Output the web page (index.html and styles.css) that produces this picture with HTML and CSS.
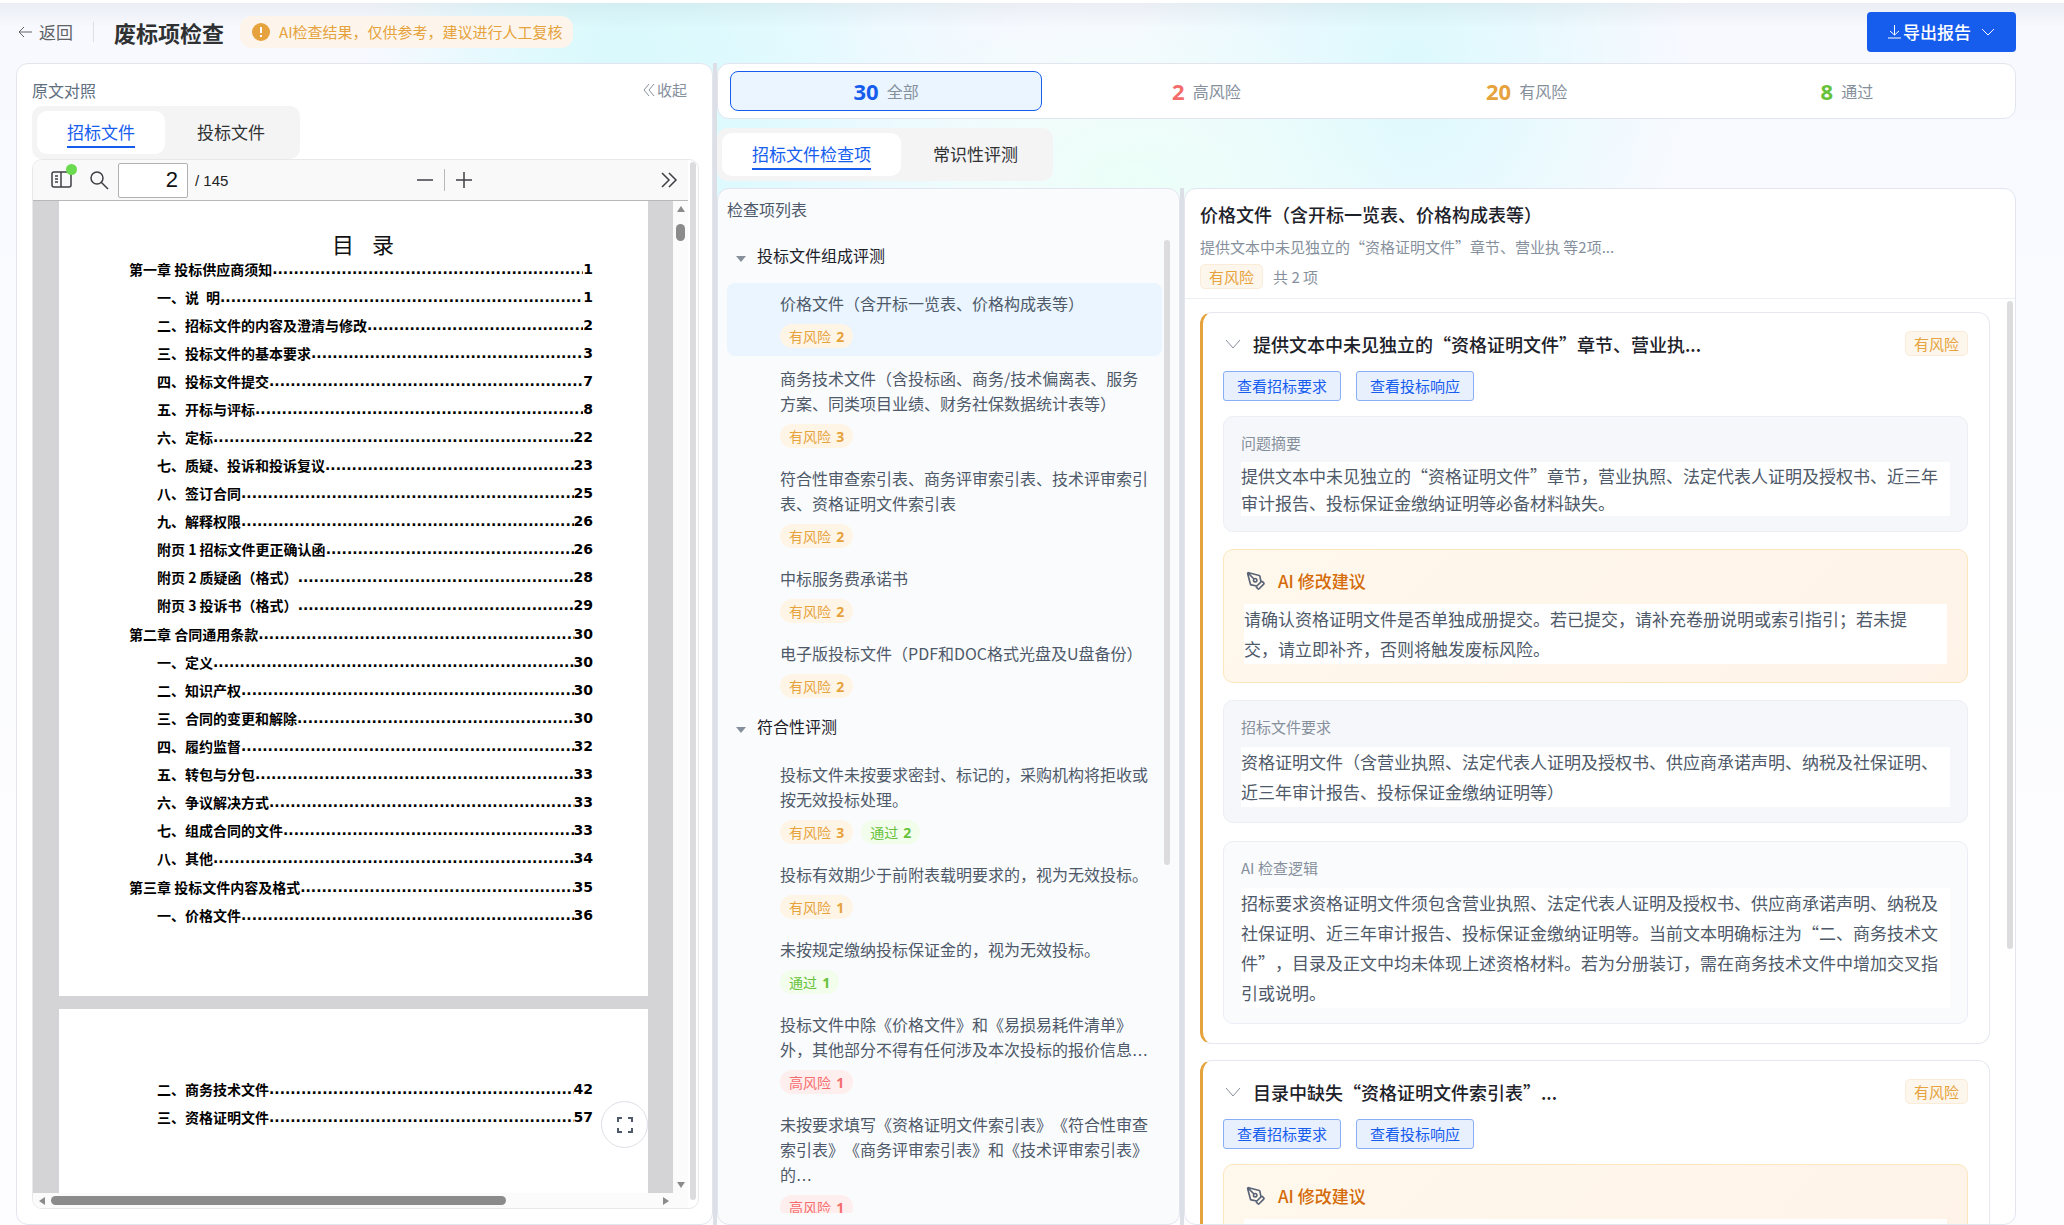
FILE: index.html
```html
<!DOCTYPE html>
<html lang="zh-CN">
<head>
<meta charset="utf-8">
<title>废标项检查</title>
<link rel="stylesheet" href="styles.css">
</head>
<body>
<header class="topbar">
  <a class="back" href="#"><svg width="16" height="16" viewBox="0 0 16 16"><path d="M15 8H2M7 3 2 8l5 5"/></svg>返回</a>
  <span class="topbar-line"></span>
  <h1>废标项检查</h1>
  <p class="notice"><svg width="18" height="18" viewBox="0 0 18 18"><circle cx="9" cy="9" r="9"/><path d="M9 4v6M9 12v2"/></svg>AI检查结果，仅供参考，建议进行人工复核</p>
  <button class="export"><svg width="13" height="16" viewBox="0 0 13 16"><path d="M6.500 1v10M2 7l4.500 4L11 7M0 14h13"/></svg>导出报告<svg class="export-caret" width="14" height="14" viewBox="0 0 14 14"><path d="m1 4 6 6 6-6"/></svg></button>
</header>
<main class="workspace">
  <section class="panel source">
    <div class="source-head"><h2>原文对照</h2><button class="collapse"><svg width="12" height="14" viewBox="0 0 12 14"><path d="M6 1 1 7l5 6M11 1 6 7l5 6"/></svg>收起</button></div>
    <nav class="tabs"><button class="tab on"><span>招标文件</span></button><button class="tab"><span>投标文件</span></button></nav>
    <div class="viewer">
      <div class="viewer-main">
        <div class="toolbar">
          <button class="tool side" aria-label="侧边栏"><svg width="22" height="18" viewBox="0 0 22 18"><rect x="1" y="1" width="19" height="15" rx="2"/><path d="M10 1v15M4 5h3M4 8h3M4 11h3"/></svg><i class="dot"></i></button>
          <button class="tool find" aria-label="查找"><svg width="20" height="20" viewBox="0 0 20 20"><circle cx="8" cy="8" r="6"/><path d="m12 12 7 7"/></svg></button>
          <input class="page-input" aria-label="页码" value="2"><span class="page-total">/ 145</span>
          <span class="zooms"><button class="tool" aria-label="缩小"><svg width="18" height="18" viewBox="0 0 18 18"><path d="M1 9h16"/></svg></button><i class="zoom-line"></i><button class="tool" aria-label="放大"><svg width="18" height="18" viewBox="0 0 18 18"><path d="M1 9h16M9 1v16"/></svg></button></span>
          <button class="tool more" aria-label="更多"><svg width="18" height="18" viewBox="0 0 18 18"><path d="m2 2 7 7-7 7M9 2l7 7-7 7"/></svg></button>
        </div>
        <div class="pdf">
          <div class="pages">
            <article class="page first">
              <h3>目<span class="title-gap"></span>录</h3>
              <ol class="toc">
                <li class="chapter"><span>第一章 投标供应商须知</span><i></i><b>1</b></li>
                <li><span>一、说&ensp;明</span><i></i><b>1</b></li>
                <li><span>二、招标文件的内容及澄清与修改</span><i></i><b>2</b></li>
                <li><span>三、投标文件的基本要求</span><i></i><b>3</b></li>
                <li><span>四、投标文件提交</span><i></i><b>7</b></li>
                <li><span>五、开标与评标</span><i></i><b>8</b></li>
                <li><span>六、定标</span><i></i><b>22</b></li>
                <li><span>七、质疑、投诉和投诉复议</span><i></i><b>23</b></li>
                <li><span>八、签订合同</span><i></i><b>25</b></li>
                <li><span>九、解释权限</span><i></i><b>26</b></li>
                <li><span>附页 1 招标文件更正确认函</span><i></i><b>26</b></li>
                <li><span>附页 2 质疑函（格式）</span><i></i><b>28</b></li>
                <li><span>附页 3 投诉书（格式）</span><i></i><b>29</b></li>
                <li class="chapter"><span>第二章 合同通用条款</span><i></i><b>30</b></li>
                <li><span>一、定义</span><i></i><b>30</b></li>
                <li><span>二、知识产权</span><i></i><b>30</b></li>
                <li><span>三、合同的变更和解除</span><i></i><b>30</b></li>
                <li><span>四、履约监督</span><i></i><b>32</b></li>
                <li><span>五、转包与分包</span><i></i><b>33</b></li>
                <li><span>六、争议解决方式</span><i></i><b>33</b></li>
                <li><span>七、组成合同的文件</span><i></i><b>33</b></li>
                <li><span>八、其他</span><i></i><b>34</b></li>
                <li class="chapter"><span>第三章 投标文件内容及格式</span><i></i><b>35</b></li>
                <li><span>一、价格文件</span><i></i><b>36</b></li>
              </ol>
            </article>
            <article class="page second">
              <ol class="toc">
                <li><span>二、商务技术文件</span><i></i><b>42</b></li>
                <li><span>三、资格证明文件</span><i></i><b>57</b></li>
              </ol>
              <button class="fullscreen" aria-label="全屏"><svg width="18" height="18" viewBox="0 0 18 18"><path d="M2 6V2h4M12 2h4v4M16 12v4h-4M6 16H2v-4"/></svg></button>
            </article>
          </div>
          <div class="vbar"><i class="arrow up"></i><i class="vthumb"></i><i class="arrow down"></i></div>
        </div>
        <div class="hbar"><i class="arrow left"></i><span class="htrack"><i class="hthumb"></i></span><i class="arrow right"></i></div>
      </div>
      <i class="viewer-thumb"></i>
    </div>
  </section>
  <i class="splitter"></i>
  <section class="results">
    <div class="panel stats">
      <button class="stat on blue"><b>30</b>全部</button>
      <button class="stat red"><b>2</b>高风险</button>
      <button class="stat orange"><b>20</b>有风险</button>
      <button class="stat green"><b>8</b>通过</button>
    </div>
    <nav class="tabs"><button class="tab on"><span>招标文件检查项</span></button><button class="tab"><span>常识性评测</span></button></nav>
    <div class="columns">
      <section class="panel list">
        <h2>检查项列表</h2>
        <div class="list-body">
          <div class="groups">
            <h3 class="group"><i></i>投标文件组成评测</h3>
            <ul class="items">
              <li class="item on"><p>价格文件（含开标一览表、价格构成表等）</p><div class="badges"><span class="badge warn">有风险 <b>2</b></span></div></li>
              <li class="item"><p>商务技术文件（含投标函、商务/技术偏离表、服务方案、同类项目业绩、财务社保数据统计表等）</p><div class="badges"><span class="badge warn">有风险 <b>3</b></span></div></li>
              <li class="item"><p>符合性审查索引表、商务评审索引表、技术评审索引表、资格证明文件索引表</p><div class="badges"><span class="badge warn">有风险 <b>2</b></span></div></li>
              <li class="item"><p>中标服务费承诺书</p><div class="badges"><span class="badge warn">有风险 <b>2</b></span></div></li>
              <li class="item"><p>电子版投标文件（PDF和DOC格式光盘及U盘备份）</p><div class="badges"><span class="badge warn">有风险 <b>2</b></span></div></li>
            </ul>
            <h3 class="group"><i></i>符合性评测</h3>
            <ul class="items">
              <li class="item"><p>投标文件未按要求密封、标记的，采购机构将拒收或按无效投标处理。</p><div class="badges"><span class="badge warn">有风险 <b>3</b></span><span class="badge pass">通过 <b>2</b></span></div></li>
              <li class="item"><p>投标有效期少于前附表载明要求的，视为无效投标。</p><div class="badges"><span class="badge warn">有风险 <b>1</b></span></div></li>
              <li class="item"><p>未按规定缴纳投标保证金的，视为无效投标。</p><div class="badges"><span class="badge pass">通过 <b>1</b></span></div></li>
              <li class="item"><p>投标文件中除《价格文件》和《易损易耗件清单》外，其他部分不得有任何涉及本次投标的报价信息<span class="dots">…</span></p><div class="badges"><span class="badge high">高风险 <b>1</b></span></div></li>
              <li class="item"><p>未按要求填写《资格证明文件索引表》《符合性审查索引表》《商务评审索引表》和《技术评审索引表》的<span class="dots">…</span></p><div class="badges"><span class="badge high">高风险 <b>1</b></span></div></li>
            </ul>
          </div>
          <i class="list-thumb"></i>
        </div>
      </section>
      <i class="splitter"></i>
      <section class="panel detail">
        <div class="detail-head">
          <h2>价格文件（含开标一览表、价格构成表等）</h2>
          <p>提供文本中未见独立的“资格证明文件”章节、营业执 等2项...</p>
          <div class="detail-meta"><span class="tag">有风险</span><span>共 2 项</span></div>
        </div>
        <div class="detail-body">
          <div class="cards">
            <article class="card">
              <div class="card-head"><svg width="16" height="16" viewBox="0 0 16 16"><path d="m1 4 7 8 7-8"/></svg><h3>提供文本中未见独立的“资格证明文件”章节、营业执...</h3><span class="tag">有风险</span></div>
              <div class="actions"><button>查看招标要求</button><button>查看投标响应</button></div>
              <div class="block"><h4>问题摘要</h4><p class="tight">提供文本中未见独立的“资格证明文件”章节，营业执照、法定代表人证明及授权书、近三年审计报告、投标保证金缴纳证明等必备材料缺失。</p></div>
              <div class="block advice"><h4><svg width="20" height="20" viewBox="0 0 24 24"><path d="M15.707 21.293a1 1 0 0 1-1.414 0l-1.586-1.586a1 1 0 0 1 0-1.414l5.586-5.586a1 1 0 0 1 1.414 0l1.586 1.586a1 1 0 0 1 0 1.414zM18 13l-1.375-6.874a1 1 0 0 0-.746-.776L3.235 2.028a1 1 0 0 0-1.207 1.207L5.350 15.879a1 1 0 0 0 .776.746L13 18M2.300 2.300l7.286 7.286"/><circle cx="11" cy="11" r="2"/></svg>AI 修改建议</h4><p>请确认资格证明文件是否单独成册提交。若已提交，请补充卷册说明或索引指引；若未提交，请立即补齐，否则将触发废标风险。</p></div>
              <div class="block"><h4>招标文件要求</h4><p>资格证明文件（含营业执照、法定代表人证明及授权书、供应商承诺声明、纳税及社保证明、近三年审计报告、投标保证金缴纳证明等）</p></div>
              <div class="block pale"><h4>AI 检查逻辑</h4><p>招标要求资格证明文件须包含营业执照、法定代表人证明及授权书、供应商承诺声明、纳税及社保证明、近三年审计报告、投标保证金缴纳证明等。当前文本明确标注为“二、商务技术文件”，目录及正文中均未体现上述资格材料。若为分册装订，需在商务技术文件中增加交叉指引或说明。</p></div>
            </article>
            <article class="card">
              <div class="card-head"><svg width="16" height="16" viewBox="0 0 16 16"><path d="m1 4 7 8 7-8"/></svg><h3>目录中缺失“资格证明文件索引表”...</h3><span class="tag">有风险</span></div>
              <div class="actions"><button>查看招标要求</button><button>查看投标响应</button></div>
              <div class="block advice"><h4><svg width="20" height="20" viewBox="0 0 24 24"><path d="M15.707 21.293a1 1 0 0 1-1.414 0l-1.586-1.586a1 1 0 0 1 0-1.414l5.586-5.586a1 1 0 0 1 1.414 0l1.586 1.586a1 1 0 0 1 0 1.414zM18 13l-1.375-6.874a1 1 0 0 0-.746-.776L3.235 2.028a1 1 0 0 0-1.207 1.207L5.350 15.879a1 1 0 0 0 .776.746L13 18M2.300 2.300l7.286 7.286"/><circle cx="11" cy="11" r="2"/></svg>AI 修改建议</h4><p>&nbsp;</p></div>
            </article>
          </div>
          <i class="detail-thumb"></i>
        </div>
      </section>
    </div>
  </section>
</main>
</body>
</html>
```
FILE: styles.css
```css
* { box-sizing: border-box; }
body, h1, h2, h3, h4, p, ol, ul { margin: 0; padding: 0; }
h1, h2, h3, h4 { font-weight: 400; }
ul, ol { list-style: none; }
i { font-style: normal; display: block; flex: none; }
body {
  height: 100vh;
  overflow: hidden;
  display: flex;
  flex-direction: column;
  border-top: 3px solid #fff;
  font-family: "Noto Sans CJK SC", sans-serif;
  font-size: 16px;
  line-height: 24px;
  color: #4e5969;
  text-spacing-trim: space-all;
  background:
    linear-gradient(rgba(90, 110, 120, .09), rgba(90, 110, 120, 0) 28px),
    radial-gradient(ellipse 260px 200px at 620px 50px, #d9f9fc, rgba(217, 249, 252, 0)),
    radial-gradient(ellipse 280px 180px at 1130px 180px, #ebfff8, rgba(235, 255, 248, 0)),
    radial-gradient(ellipse 280px 340px at 1410px 70px, #dcf9fd, rgba(220, 249, 253, 0)),
    radial-gradient(ellipse 330px 400px at 720px 170px, #defaff, rgba(222, 250, 255, 0)),
    linear-gradient(#f7f9ff, #fdfdff 70%);
}
button, input { font: inherit; color: inherit; border: 0; background: none; padding: 0; margin: 0; text-spacing-trim: inherit; }
button { white-space: nowrap; cursor: pointer; }
svg { fill: none; stroke: currentColor; flex: none; display: block; }

.topbar { flex: none; height: 60px; display: flex; align-items: center; padding: 0 48px 2px 17px; }
.back { display: flex; align-items: center; gap: 6px; font-size: 17px; color: #606266; text-decoration: none; }
.topbar-line { width: 1px; height: 20px; background: #dcdfe6; margin: 0 20px; }
.topbar h1 { font-size: 22px; font-weight: 700; color: #303133; }
.notice { display: flex; align-items: center; gap: 9px; height: 32px; margin-left: 16px; padding: 0 10px 0 12px; border-radius: 12px; background: #fdf5eb; color: #e6a23c; font-size: 15px; }
.notice svg { fill: #e6a23c; stroke: none; }
.notice path { stroke: #fff; stroke-width: 2; }
.export { margin-left: auto; height: 40px; padding: 0 21px; border-radius: 4px; background: #165dee; color: #fff; font-size: 17px; font-weight: 500; display: flex; align-items: center; gap: 2px; }
.export-caret { margin-left: 8px; }

.workspace { flex: 1; min-height: 0; display: grid; grid-template-columns: minmax(0, 697fr) 4px minmax(0, 1299fr); padding: 0 48px 0 16px; }
.panel { background: #fff; border: 1px solid #e2e5ee; border-radius: 12px; }
.splitter { background: #dcdfe6; }

.tabs { display: flex; gap: 2px; align-self: flex-start; width: max-content; padding: 5px; border-radius: 10px; background: #f4f4f5; font-size: 17px; color: #303133; }
.tab { height: 43px; padding: 0 30px; border-radius: 10px; }
.tab span { display: block; line-height: 28px; border-bottom: 2px solid transparent; }
.tab.on { background: #fff; color: #165dee; }
.tab.on span { border-color: #165dee; }

.source { padding: 14px 13px 15px 15px; display: flex; flex-direction: column; min-height: 0; }
.source-head { display: flex; justify-content: space-between; align-items: center; height: 24px; margin-bottom: 4px; padding-right: 12px; }
.source-head h2 { font-size: 16px; color: #606f80; }
.collapse { display: flex; align-items: center; gap: 2px; font-size: 15px; color: #86909c; }
.viewer { flex: 1; min-height: 0; display: flex; border: 1px solid #e8e8ea; border-radius: 10px; overflow: hidden; }
.viewer-main { flex: 1; min-width: 0; display: flex; flex-direction: column; }
.viewer-thumb { width: 6px; margin: 2px 2px 8px; border-radius: 3px; background: #dcdcde; }
.toolbar { flex: none; height: 41px; display: flex; align-items: center; padding: 0 10px 0 18px; background: #f9f9fa; border-bottom: 1px solid #b8b8b8; color: #3f3f44; }
.tool { display: block; }
.side { position: relative; }
.dot { position: absolute; right: -4px; top: -7px; width: 11px; height: 11px; border-radius: 50%; background: #6adb4f; }
.tool svg { stroke-width: 1.500; }
.find { margin: 0 9px 0 16px; }
.page-input { width: 70px; height: 35px; padding: 0 9px; border: 1px solid #b0b0b5; border-radius: 2px; background: #fff; text-align: right; font: 22px "Liberation Sans", sans-serif; color: #111; }
.page-total { font: 15px "Liberation Sans", sans-serif; color: #222; margin-left: 7px; }
.zooms { display: flex; align-items: center; gap: 10px; margin: 0 auto; }
.zoom-line { width: 1px; height: 22px; background: #b8b8bb; }
.pdf { flex: 1; min-height: 0; display: flex; background: #d4d4d7; }
.pages { flex: 1; min-width: 0; padding: 0 25px 0 26px; display: flex; flex-direction: column; gap: 13px; overflow: hidden; }
.page { background: #fff; padding: 0 55px 0 70px; font-weight: 700; font-size: 14px; color: #000; }
.first { flex: none; padding-top: 30px; padding-bottom: 67px; }
.second { flex: 1; padding-top: 66px; position: relative; }
.page h3 { display: flex; justify-content: center; font-size: 22px; line-height: 24px; color: #111; padding-left: 4px; }
.title-gap { width: 18px; }
.toc li { display: flex; line-height: 28px; padding-left: 28px; white-space: nowrap; }
.toc .chapter { padding-left: 0; }
.toc li + .chapter { margin-top: 1px; }
.toc i { flex: 1; min-width: 0; overflow: hidden; }
.toc i, .toc b { font-family: "DejaVu Sans", sans-serif; }
.toc i::before { content: "...................................................................................."; }
.fullscreen { position: absolute; right: 0; bottom: 45px; width: 47px; height: 47px; border: 1px solid #dcdfe6; border-radius: 50%; background: #fff; color: #4e5969; display: grid; place-items: center; }
.fullscreen svg { stroke-width: 2; }
.vbar { width: 15px; background: #fbfbfb; display: flex; flex-direction: column; align-items: center; padding: 5px 0; }
.vthumb { width: 9px; height: 17px; margin-top: 12px; border-radius: 5px; background: #8b8b8b; }
.arrow { width: 0; height: 0; border: 4px solid transparent; }
.up { border-bottom: 6px solid #8b8b8b; border-top: 0; }
.down { border-top: 6px solid #8b8b8b; border-bottom: 0; margin-top: auto; }
.left { border-right: 6px solid #8b8b8b; border-left: 0; }
.right { border-left: 6px solid #8b8b8b; border-right: 0; }
.hbar { height: 15px; flex: none; display: flex; align-items: center; padding: 0 19px 0 6px; gap: 6px; background: #fbfbfb; }
.htrack { flex: 1; }
.hthumb { width: 75%; height: 9px; border-radius: 5px; background: #8b8b8b; }

.results { min-width: 0; min-height: 0; display: flex; flex-direction: column; }
.stats { flex: none; display: grid; grid-template-columns: repeat(4, 1fr); gap: 8px; padding: 7px 12px; margin-bottom: 9px; }
.stat { height: 40px; border: 1px solid transparent; border-radius: 8px; display: flex; align-items: center; justify-content: center; gap: 8px; color: #86909c; }
.stat.on { background: #eaf5ff; border-color: #165dee; }
.stat b { font: 700 22px/36px "Noto Sans", sans-serif; }
.blue b { color: #165dee; }
.red b { color: #f56c6c; }
.orange b { color: #e6a23c; }
.green b { color: #67c23a; }
.columns { flex: 1; min-height: 0; margin-top: 7px; display: grid; grid-template-columns: minmax(0, 463fr) 4px minmax(0, 832fr); }

.list { background: #fafbfd; padding: 8px 9px 11px; display: flex; flex-direction: column; min-height: 0; }
.list h2 { font-size: 16px; }
.list-body { flex: 1; min-height: 0; display: flex; margin-top: 16px; }
.groups { flex: 1; min-width: 0; overflow: hidden; }
.list-thumb { width: 6px; height: 64%; margin-top: 3px; margin-left: 2px; border-radius: 3px; background: #dcdcde; }
.group { display: flex; align-items: center; gap: 11px; font-size: 16px; color: #1d2129; padding: 6px 0 16px 9px; }
.group i { width: 0; height: 0; margin-top: 8px; border: 5px solid transparent; border-top: 6px solid #86909c; border-bottom: 0; }
.items { display: grid; gap: 2px; padding-bottom: 2px; }
.item { border-radius: 8px; padding: 8px 12px 8px 53px; }
.item.on { background: #eaf5ff; }
.item p { line-height: 25px; }
.dots { font-family: "DejaVu Sans", sans-serif; line-height: 1; }
.badges { display: flex; gap: 8px; margin-top: 8px; }
.badge { height: 24px; padding: 0 9px; border-radius: 12px; font-size: 14px; line-height: 24px; }
.badge b { font-family: "Noto Sans", sans-serif; margin-left: 2px; }
.warn { background: #fff5e6; color: #e6a23c; }
.pass { background: #f2fdec; color: #67c23a; }
.high { background: #ffeeee; color: #f56c6c; }

.detail { display: flex; flex-direction: column; min-height: 0; overflow: hidden; }
.detail-head { flex: none; padding: 12px 15px 9px; border-bottom: 1px solid #ebeef2; color: #86909c; font-size: 15px; }
.detail-head h2 { font-size: 18px; line-height: 26px; font-weight: 500; color: #1d2129; margin-bottom: 8px; }
.detail-meta { display: flex; align-items: center; gap: 10px; margin-top: 5px; }
.tag { height: 25px; padding: 0 8px; border: 1px solid #faecd8; border-radius: 5px; background: #fdf6ec; color: #e6a23c; font-size: 15px; line-height: 23px; }
.detail-body { flex: 1; min-height: 0; display: flex; padding: 0 2px 0 15px; }
.cards { flex: 1; min-width: 0; padding-top: 13px; overflow: hidden; }
.detail-thumb { width: 6px; height: 70%; margin: 2px 0 0 17px; border-radius: 3px; background: #dcdcde; }
.card { border: 1px solid #e5e8ef; border-left: 3px solid #e6a23c; border-radius: 12px; padding: 18px 21px 19px 20px; margin-bottom: 16px; }
.card-head { display: flex; align-items: center; gap: 12px; padding-left: 2px; color: #86909c; }
.card-head h3 { flex: 1; font-size: 18px; font-weight: 500; color: #1d2129; }
.actions { display: flex; gap: 15px; margin: 15px 0; }
.actions button { height: 30px; padding: 0 13px; border: 1px solid #8aaef6; border-radius: 3px; background: #e8effd; color: #165dee; font-size: 15px; }
.block { border: 1px solid #ebeef5; border-radius: 10px; background: #f6f7fa; padding: 15px 17px; margin-top: 17px; }
.actions + .block { margin-top: 0; }
.pale { background: #fafbfd; margin-top: 18px; }
.block h4 { font-size: 15px; line-height: 22px; color: #86909c; margin-bottom: 8px; }
.block p { font-size: 17px; line-height: 30px; padding-right: 8px; background: #fff; }
.block .tight { line-height: 27px; }
.advice ~ .block h4 { margin-bottom: 9px; }
.block.advice { border-color: #fde6bd; background: linear-gradient(135deg, #fff8ec, #fff3e8); padding: 18px 20px; }
.advice h4 { display: flex; align-items: center; gap: 12px; padding-left: 2px; font-size: 17px; line-height: 26px; font-weight: 500; color: #d46b08; margin-bottom: 10px; }
.advice h4 svg { color: #5a6478; stroke-width: 2; }
```
